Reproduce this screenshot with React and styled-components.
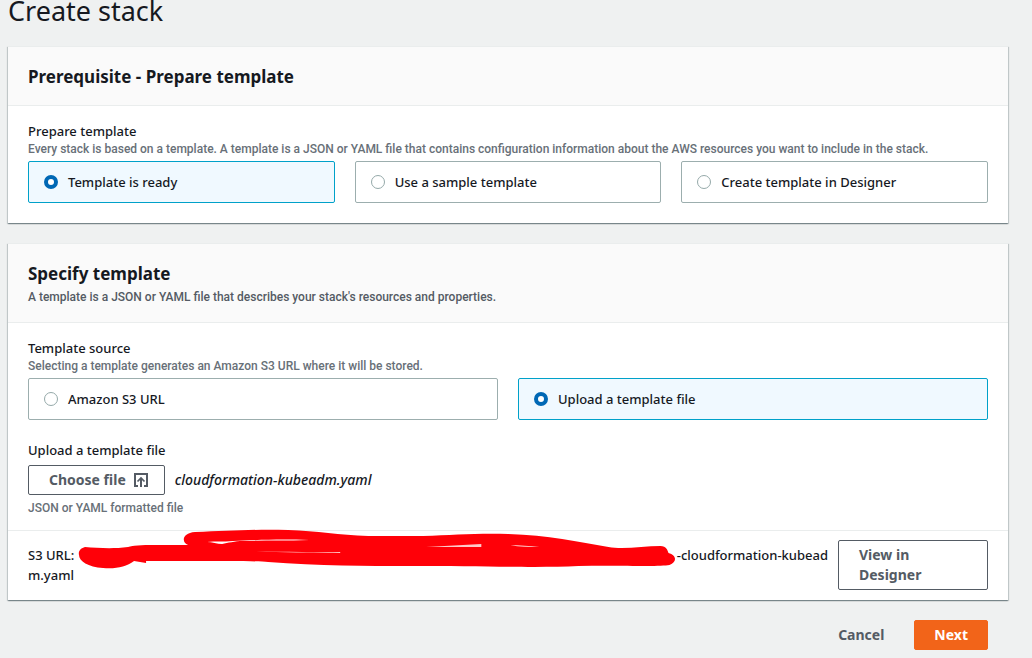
import React, { useState } from 'react';
import styled, { createGlobalStyle } from 'styled-components';

const GlobalStyle = createGlobalStyle`
  *, *::before, *::after { box-sizing: border-box; }
  body {
    margin: 0;
    background: #eff1f1;
    color: #16191f;
    font: 500 13px/20px "Noto Sans", "Open Sans", sans-serif;
  }
`;

const Page = styled.main`
  display: flex;
  flex-direction: column;
  gap: 20px;
  padding: 0 24px 8px 8px;
`;

const PageTitle = styled.h1`
  margin: 0 0 4px;
  font-size: 27px;
  font-weight: 400;
  line-height: 22px;
`;

const Panel = styled.section`
  background: #fff;
  border-top: 1px solid #eaeded;
  box-shadow:
    0 1px 1px 0 rgba(0, 28, 36, 0.3),
    1px 1px 1px 0 rgba(0, 28, 36, 0.15),
    -1px 1px 1px 0 rgba(0, 28, 36, 0.15);
`;

const PanelHeader = styled.header`
  padding: 19px 20px 17px;
  background: #fafafa;
  border-bottom: 1px solid #eaeded;
`;

const PanelTitle = styled.h2`
  margin: 0;
  font-size: 17px;
  font-weight: 700;
  line-height: 22px;
`;

const PanelDescription = styled.p`
  margin: 4px 0 0;
  color: #545b64;
  font-family: Roboto, sans-serif;
  font-size: 12px;
  line-height: 16px;
`;

const PanelBody = styled.div`
  display: flex;
  flex-direction: column;
  gap: 20px;
  padding: 15px 20px ${({ $bottom }) => $bottom}px;
`;

const Field = styled.fieldset`
  min-width: 0;
  margin: 0;
  padding: 0;
  border: 0;
`;

const FieldLabel = styled.legend`
  display: block;
  padding: 0;
`;

const Hint = styled.p`
  margin: 0;
  color: #687078;
  font-family: Roboto, sans-serif;
  font-size: 12px;
  line-height: 16px;
`;

const Tiles = styled.div`
  display: grid;
  grid-template-columns: repeat(${({ $columns }) => $columns}, 1fr);
  gap: 20px;
  margin-top: 4px;
`;

const Tile = styled.label`
  display: flex;
  align-items: center;
  gap: 10px;
  padding: 10px 15px;
  background: ${({ $checked }) => ($checked ? '#f0f9ff' : '#fff')};
  border: 1px solid ${({ $checked }) => ($checked ? '#00a1c9' : '#9caeae')};
  border-radius: 2px;
  cursor: pointer;
`;

const Radio = styled.input`
  appearance: none;
  flex: none;
  width: 14px;
  height: 14px;
  margin: 0;
  background: #fff;
  border: 1px solid #95a9a9;
  border-radius: 50%;

  &:checked {
    border: 4px solid #0068b5;
  }
`;

const Button = styled.button`
  display: inline-flex;
  align-items: center;
  gap: 8px;
  padding: 4px 20px;
  background: #fff;
  border: 1px solid #545b64;
  border-radius: 2px;
  color: #545b64;
  font: 700 14px/20px "Noto Sans", "Open Sans", sans-serif;
  text-align: left;
  cursor: pointer;
`;

const FileButton = styled(Button)`
  padding-right: 16px;
`;

const DesignerButton = styled(Button)`
  flex: 0 0 150px;
`;

const ActionButton = styled(Button)`
  padding: 4px 19px;
  background: ${({ $primary }) => ($primary ? '#f26419' : 'transparent')};
  border-color: ${({ $primary }) => ($primary ? '#f26419' : 'transparent')};
  color: ${({ $primary }) => ($primary ? '#fff' : '#545b64')};
`;

const FileRow = styled.div`
  display: flex;
  align-items: center;
  gap: 10px;
  margin: 5px 0;
`;

const FileName = styled.span`
  font-size: 14px;
  font-style: italic;
`;

const PanelFooter = styled.footer`
  display: flex;
  gap: 10px;
  padding: 9px 20px 10px;
  border-top: 1px solid #eaeded;
`;

const StackUrl = styled.div`
  flex: 1;
  min-width: 0;
  padding-top: 5px;
`;

const UrlLine = styled.div`
  display: flex;
`;

const Redaction = styled.span`
  position: relative;
  flex: 1;
  margin-left: 4px;
`;

const Scribble = styled.svg`
  position: absolute;
  top: -17px;
  left: 0;
  width: 100%;
  height: 42px;
`;

const Actions = styled.div`
  display: flex;
  justify-content: flex-end;
  gap: 10px;
  padding-right: 20px;
`;

function UploadIcon() {
  return (
    <svg width="14" height="14" viewBox="0 0 14 14" fill="none" stroke="currentColor" strokeWidth="2" aria-hidden="true">
      <path d="M4 13H1V1h12v12h-3" />
      <path d="M7 14V5" />
      <path d="M3.5 8.5 7 5l3.5 3.5" strokeWidth="1.7" />
    </svg>
  );
}

function TileGroup({ name, options, initial }) {
  const [value, setValue] = useState(initial);
  return (
    <Tiles $columns={options.length}>
      {options.map((option) => (
        <Tile key={option} $checked={option === value}>
          <Radio type="radio" name={name} checked={option === value} onChange={() => setValue(option)} />
          {option}
        </Tile>
      ))}
    </Tiles>
  );
}

export default function App() {
  return (
    <>
      <GlobalStyle />
      <Page>
        <PageTitle>Create stack</PageTitle>

        <Panel>
          <PanelHeader>
            <PanelTitle>Prerequisite - Prepare template</PanelTitle>
          </PanelHeader>
          <PanelBody $bottom={20}>
            <Field>
              <FieldLabel>Prepare template</FieldLabel>
              <Hint>
                Every stack is based on a template. A template is a JSON or YAML file that contains configuration
                information about the AWS resources you want to include in the stack.
              </Hint>
              <TileGroup
                name="prepare"
                options={['Template is ready', 'Use a sample template', 'Create template in Designer']}
                initial="Template is ready"
              />
            </Field>
          </PanelBody>
        </Panel>

        <Panel>
          <PanelHeader>
            <PanelTitle>Specify template</PanelTitle>
            <PanelDescription>
              A template is a JSON or YAML file that describes your stack's resources and properties.
            </PanelDescription>
          </PanelHeader>
          <PanelBody $bottom={14}>
            <Field>
              <FieldLabel>Template source</FieldLabel>
              <Hint>Selecting a template generates an Amazon S3 URL where it will be stored.</Hint>
              <TileGroup
                name="source"
                options={['Amazon S3 URL', 'Upload a template file']}
                initial="Upload a template file"
              />
            </Field>
            <Field>
              <FieldLabel>Upload a template file</FieldLabel>
              <FileRow>
                <FileButton type="button">
                  Choose file
                  <UploadIcon />
                </FileButton>
                <FileName>cloudformation-kubeadm.yaml</FileName>
              </FileRow>
              <Hint>JSON or YAML formatted file</Hint>
            </Field>
          </PanelBody>
          <PanelFooter>
            <StackUrl>
              <UrlLine>
                <span>S3 URL:</span>
                <Redaction>
                  <Scribble viewBox="0 0 598 42" preserveAspectRatio="none" aria-hidden="true">
                    <path
                      fill="#ff0008"
                      d="M7 19C20 20 35 21 50 19C58 17 68 17 80 17H110C103 14 104 5 117 4C150 3 175 1 210 2C240 3 260 7 290 8H345C375 7 400 5 430 6C470 7 500 14 530 19C545 22 565 18 582 18C588 18 589 22 590 25C598 27 599 34 591 37C580 39 540 37 500 38C460 40 410 38 330 38C290 38 240 38 190 34C180 33 150 33 120 33H68V35L56 33C48 39 38 41 25 40C10 39 1 33 1 27C0 23 3 20 7 19Z"
                    />
                    <path fill="#fff" d="M129 14C134 14 139 16 144 16C150 15 156 13 165 13C190 12 210 13 231 12C200 11 180 12 155 13C145 14 137 13 129 14Z" />
                    <path fill="#ffc9c9" d="M178 24C210 23 240 25 262 24V25C230 25 205 24 178 24ZM348 19L403 16V19ZM432 17C442 17 451 18 461 19C450 19 441 19 432 17Z" />
                  </Scribble>
                </Redaction>
                <span>-cloudformation-kubead</span>
              </UrlLine>
              m.yaml
            </StackUrl>
            <DesignerButton type="button">View in Designer</DesignerButton>
          </PanelFooter>
        </Panel>

        <Actions>
          <ActionButton type="button">Cancel</ActionButton>
          <ActionButton type="button" $primary>Next</ActionButton>
        </Actions>
      </Page>
    </>
  );
}
